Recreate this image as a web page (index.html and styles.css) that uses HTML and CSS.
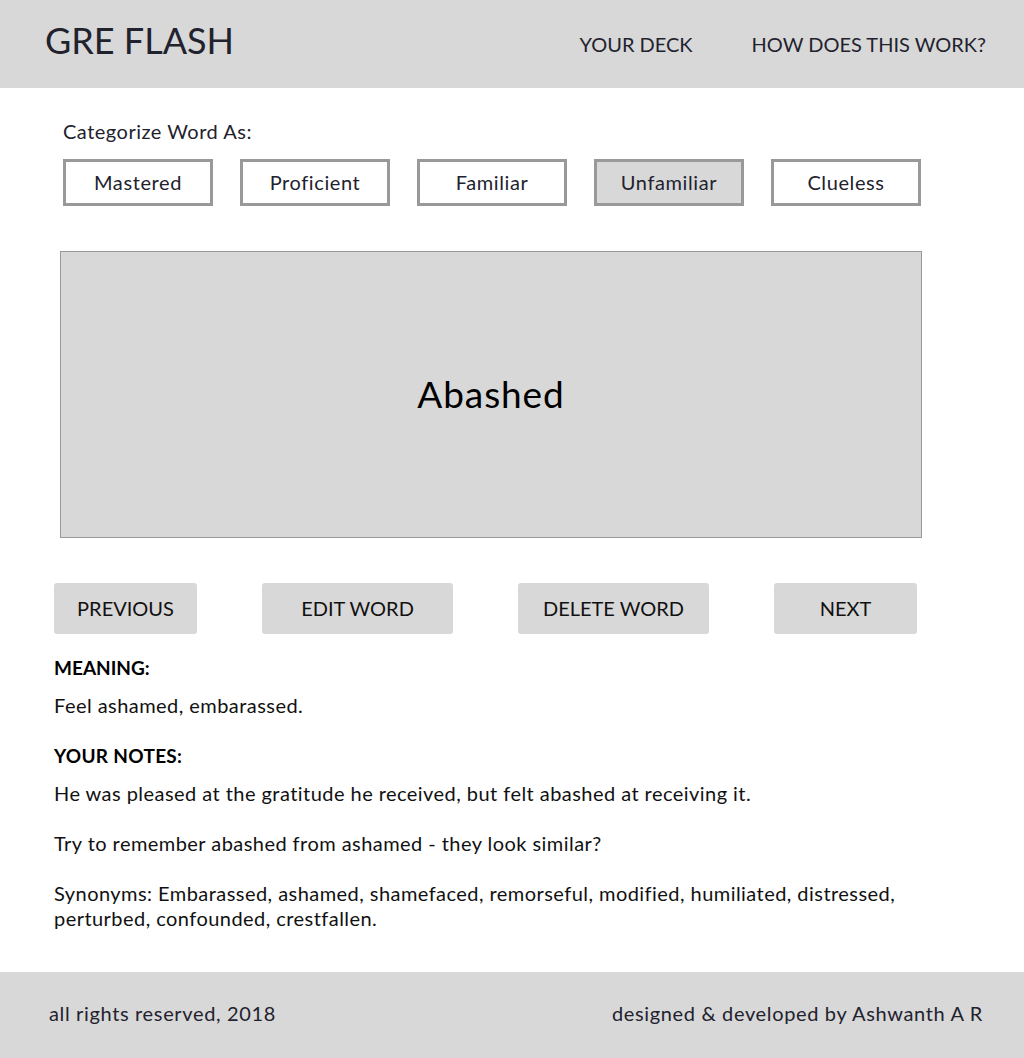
FILE: index.html
```html
<!DOCTYPE html>
<html lang="en">
<head>
<meta charset="utf-8">
<title>GRE Flash</title>
<link rel="stylesheet" href="styles.css">
</head>
<body>
<header class="topbar">
  <div class="logo">GRE FLASH</div>
  <nav class="nav">
    <a class="nav-link">YOUR DECK</a>
    <a class="nav-link">HOW DOES THIS WORK?</a>
  </nav>
</header>
<main class="main">
  <section class="categorize">
    <div class="cat-label">Categorize Word As:</div>
    <div class="cat-buttons">
      <button class="cat-btn">Mastered</button>
      <button class="cat-btn">Proficient</button>
      <button class="cat-btn">Familiar</button>
      <button class="cat-btn active">Unfamiliar</button>
      <button class="cat-btn">Clueless</button>
    </div>
  </section>
  <section class="card">
    <div class="word">Abashed</div>
  </section>
  <section class="actions">
    <button class="act-btn small">PREVIOUS</button>
    <button class="act-btn wide">EDIT WORD</button>
    <button class="act-btn wide">DELETE WORD</button>
    <button class="act-btn small">NEXT</button>
  </section>
  <section class="details">
    <h3 class="heading">MEANING:</h3>
    <p class="text">Feel ashamed, embarassed.</p>
    <h3 class="heading notes-heading">YOUR NOTES:</h3>
    <p class="text">He was pleased at the gratitude he received, but felt abashed at receiving it.</p>
    <p class="text gap">Try to remember abashed from ashamed - they look similar?</p>
    <p class="text gap">Synonyms: Embarassed, ashamed, shamefaced, remorseful, modified, humiliated, distressed, perturbed, confounded, crestfallen.</p>
  </section>
</main>
<footer class="footer">
  <span>all rights reserved, 2018</span>
  <span>designed &amp; developed by Ashwanth A R</span>
</footer>
</body>
</html>
```

FILE: styles.css
```css
* { box-sizing: border-box; }
html, body { margin: 0; padding: 0; }
body {
  font-family: Lato, "Noto Sans", sans-serif;
  color: #111;
  background: #fff;
  width: 1024px;
}
.topbar {
  height: 88px;
  background: #d8d8d8;
  display: flex;
  align-items: center;
  justify-content: space-between;
  padding: 0 38px 0 45px;
  color: #22222e;
}
.logo {
  font-size: 36px;
  margin-top: -8px;
}
.nav {
  display: flex;
  gap: 59px;
  margin-top: 0;
}
.nav-link {
  font-size: 20px;
  color: #22222e;
}
.main {
  padding: 0 0 0 54px;
}
.categorize {
  padding: 31px 0 0 9px;
}
.cat-label {
  font-size: 20px;
  line-height: 24px;
  letter-spacing: 0.5px;
  color: #22222e;
}
.cat-buttons {
  display: flex;
  gap: 27px;
  margin-top: 16px;
}
.cat-btn {
  width: 150px;
  height: 47px;
  border: 3px solid #999;
  background: #fff;
  font-family: inherit;
  font-size: 20px;
  letter-spacing: 0.6px;
  color: #22222e;
  padding: 0 0 2px;
}
.cat-btn.active { background: #d8d8d8; }
.card {
  margin: 45px 0 0 6px;
  width: 862px;
  height: 287px;
  border: 1px solid #999;
  background: #d8d8d8;
  display: flex;
  align-items: center;
  justify-content: center;
}
.word {
  font-size: 37px;
  letter-spacing: 0.9px;
  color: #000;
  margin-top: -2px;
}
.actions {
  display: flex;
  gap: 65px;
  margin-top: 45px;
}
.act-btn {
  height: 51px;
  border: none;
  border-radius: 3px;
  background: #d8d8d8;
  font-family: inherit;
  font-size: 20px;
  color: #111;
  padding: 0 0 2px;
}
.act-btn.small { width: 143px; }
.act-btn.wide { width: 191px; }
.details {
  padding-top: 21px;
  width: 880px;
}
.heading {
  margin: 0;
  font-size: 19px;
  line-height: 25px;
  font-weight: 700;
  color: #000;
}
.notes-heading { margin-top: 25px; letter-spacing: 0.3px; }
.text {
  margin: 13px 0 0;
  font-size: 20px;
  line-height: 25px;
  letter-spacing: 0.45px;
  color: #111;
}
.text.gap { margin-top: 25px; }
.footer {
  margin-top: 41px;
  height: 86px;
  background: #d8d8d8;
  display: flex;
  align-items: center;
  justify-content: space-between;
  padding: 0 41px 4px 49px;
  font-size: 20px;
  letter-spacing: 0.65px;
  color: #22222e;
}
```
